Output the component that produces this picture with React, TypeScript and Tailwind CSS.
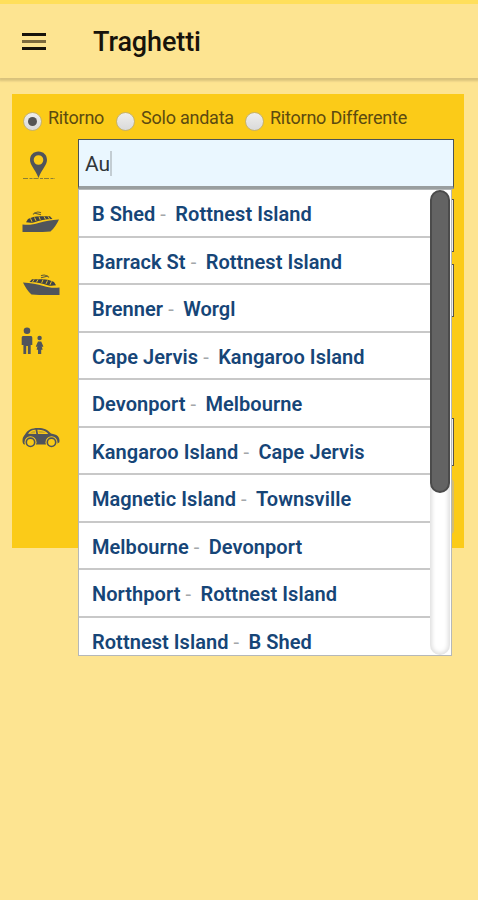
import { useState } from "react";

const ROUTES = [
  { from: "B Shed", to: "Rottnest Island" },
  { from: "Barrack St", to: "Rottnest Island" },
  { from: "Brenner", to: "Worgl" },
  { from: "Cape Jervis", to: "Kangaroo Island" },
  { from: "Devonport", to: "Melbourne" },
  { from: "Kangaroo Island", to: "Cape Jervis" },
  { from: "Magnetic Island", to: "Townsville" },
  { from: "Melbourne", to: "Devonport" },
  { from: "Northport", to: "Rottnest Island" },
  { from: "Rottnest Island", to: "B Shed" },
];

const TRIP_TYPES = [
  { label: "Ritorno", width: "w-[93px]" },
  { label: "Solo andata", width: "w-[129px]" },
  { label: "Ritorno Differente", width: "w-[170px]" },
];

function PinIcon() {
  return (
    <svg width="34" height="30" viewBox="0 0 34 30" className="ml-[10px] mt-[11px]">
      <path fillRule="evenodd" fill="#50545b" d="M16.5 1.500C11.500 1.500 8 5 8 10c0 5 5 9 8.500 18 3.500-9 8.500-13 8.500-18 0-5-3.500-8.500-8.500-8.500Zm0 3.700a4.800 4.800 0 1 1 0 9.600 4.800 4.800 0 0 1 0-9.600Z" />
      <path d="M1 28.500H33" stroke="#8b7f35" strokeWidth="1" strokeDasharray="5 1.500 3 1" />
    </svg>
  );
}

function ShipIcon({ flip = false }: { flip?: boolean }) {
  return (
    <svg width="38" height="24" viewBox="0 0 38 24" className={"ml-[10px] mt-px " + (flip ? "-scale-x-100" : "")}>
      <path fill="#50545b" d="M.5 14.500c6 .6 11 .2 16-1.500 6-2 13-3 20.500-3.500-2 4.500-5 9-8.500 12-9 .8-19 .5-28 .5Z" />
      <path fill="#3f4347" d="M4 12.300 6 9c3-1.700 7-2.600 12-2.800l10 .1 2.500 2.700c-7 .2-13 1.300-18 3.200-3 .8-5.500.6-8.500.1Z" />
      <path d="m8.500 8.300 1.500 3.500M12.500 7.500l1.500 3.400M17 6.700l1.300 3.200M22 6.500l1.500 2.800M26 6.500l1.500 2.500" stroke="#fbcb18" strokeWidth=".9" />
      <path d="M11 4.300c2.500-2.600 5.500-2.800 8-1.500M12 3l7 1.800" stroke="#625c35" strokeWidth="1.100" fill="none" />
    </svg>
  );
}

function PeopleIcon() {
  return (
    <svg width="24" height="28" viewBox="0 0 24 28" className="ml-[8px]" fill="#50545b">
      <circle cx="7" cy="3.700" r="3.300" />
      <path d="M3.500 9h7c1.200 0 1.800.6 1.800 1.800V18h-1.600v9H7.900v-8H6.200v8H3.400v-9H1.700v-7.200C1.700 9.600 2.300 9 3.500 9Z" />
      <circle cx="19.600" cy="11" r="2.200" />
      <path d="M18 14.500h3.200l2.200 5-1 .6-.7-1 .9 3.600h-1.400V27h-3.200v-4.300h-1.400l.9-3.600-.7 1-1-.6Z" />
    </svg>
  );
}

function CarIcon() {
  return (
    <svg width="40" height="22" viewBox="0 0 40 22" className="ml-[9px]">
      <path fill="#50545b" d="M1.500 13c.2-3 1.500-4 2.500-5.500C6.500 3 10.500 1 17 1c6 0 9.500 1.500 13 5.600 4.500.7 7 2 8 4.400.5 1.700.8 3.500.2 4.500L34 17.500H3c-1.300-1-1.500-2.500-1.500-4.500Z" />
      <path fill="#fbcb18" d="M7 6.800C8.800 3.900 11 2.900 14.500 2.700l.8 4.300ZM16.300 2.700c4-.2 7.200.6 10.200 3.300l.5 1-9.900.1Z" />
      <path fill="#c9a828" d="M9 6.300c1.500-1.700 3-2.300 4.800-2.500l.6 2.500ZM17.300 3.700c3-.1 5.200.5 7.400 2.400l-6.800.2Z" />
      {[9.5, 30.5].map(cx => (
        <g key={cx}>
          <circle cx={cx} cy="15.300" r="6" fill="#fbcb18" />
          <circle cx={cx} cy="15.300" r="4.200" fill="#fbcb18" stroke="#50545b" strokeWidth="1.600" />
        </g>
      ))}
    </svg>
  );
}

function RouteList() {
  return (
    <div className="absolute left-0 top-[50px] z-10 flex h-[467px] w-[374px] overflow-hidden border border-[#b5b8b9] bg-white">
      <ul className="w-[351px] shrink-0 text-[20px] font-semibold leading-[48px] tracking-[0.05px] text-[#164577]">
        {ROUTES.map(r => (
          <li key={r.from} className="flex h-[47.55px] items-start whitespace-pre border-b-2 border-[#c8c8c8] pl-[13px]">
            <span>{r.from}</span>
            <span className="w-[20px] pl-[5px] font-normal text-[#a3a7aa]">-</span>
            <span>{r.to}</span>
          </li>
        ))}
      </ul>
      {/* Scroll track */}
      <div className="h-[465px] w-[20px] shrink-0 rounded-full bg-white shadow-[inset_0_0_4px_2px_#dedede]">
        <div className="h-[303px] rounded-full border-2 border-[#4b4b4b] bg-[#636363]" />
      </div>
    </div>
  );
}

export default function App() {
  const [trip, setTrip] = useState("Ritorno");
  const [query, setQuery] = useState("Au");

  return (
    <div className="h-[900px] w-[478px] overflow-hidden bg-[#fde491] font-[Roboto,sans-serif]">
      <header className="flex h-[78px] items-center border-t-4 border-[#ffdf5b] pl-[22px] shadow-[0_2px_2px_1px_#d9c27c]">
        <button aria-label="Menu" className="flex w-[24px] flex-col gap-[4px]">
          <span className="h-[3px] bg-[#17130b]" />
          <span className="h-[3px] bg-[#7d6b3d]" />
          <span className="h-[3px] bg-[#17130b]" />
        </button>
        <h1 className="ml-[47px] pt-[2px] text-[27px] font-medium leading-[36px] tracking-[-0.1px] text-[#17130b]">Traghetti</h1>
      </header>

      <main className="mx-[12px] mt-[16px] h-[454px] w-[452px] bg-[#fbcb18]">
        {/* Trip type */}
        <div className="flex h-[45px] pl-[11px] pt-[14px]">
          {TRIP_TYPES.map(t => (
            <button key={t.label} onClick={() => setTrip(t.label)} className={"flex h-[22px] shrink-0 items-start " + t.width}>
              <span className="mt-[4px] flex h-[19px] w-[19px] shrink-0 items-center justify-center rounded-full border border-[#c4b271] bg-linear-to-b from-[#eeeeec] to-[#dadada]">
                {trip === t.label && <span className="h-[9px] w-[9px] rounded-full bg-[#555]" />}
              </span>
              <span className="ml-[6px] whitespace-nowrap text-[18px] leading-[20px] tracking-[-0.23px] text-[#5c4a10]">{t.label}</span>
            </button>
          ))}
        </div>

        <div className="flex">
          <div className="flex w-[66px] shrink-0 flex-col">
            <div className="h-[70px]"><PinIcon /></div>
            <div className="h-[63px]"><ShipIcon /></div>
            <div className="h-[55px]"><ShipIcon flip /></div>
            <div className="h-[100px]"><PeopleIcon /></div>
            <CarIcon />
          </div>

          <div className="relative flex w-[376px] flex-col">
            <div className="flex h-[50px] items-center border border-b-[3px] border-[#4a5358] border-b-[#999e9f] bg-[#eaf7ff] pl-[6px]">
              <input
                value={query}
                onChange={e => setQuery(e.target.value)}
                className="w-[25px] bg-transparent pt-[3px] text-[21px] text-[#30363a] outline-none"
              />
              <span className="h-[25px] w-[2px] bg-[#c3cdd3]" />
            </div>
            <div className="mt-[10px] h-[53px] border border-[#57544b] bg-[#ececec]" />
            <div className="mt-[12px] h-[53px] border border-[#57544b] bg-[#ececec]" />
            <div className="mt-[101px] h-[48px] border border-[#57544b] bg-[#ececec]" />
            <div className="mt-[13px] h-[55px] rounded-[4px] bg-[#d3bd73]" />
            <RouteList />
          </div>
        </div>
      </main>
    </div>
  );
}
